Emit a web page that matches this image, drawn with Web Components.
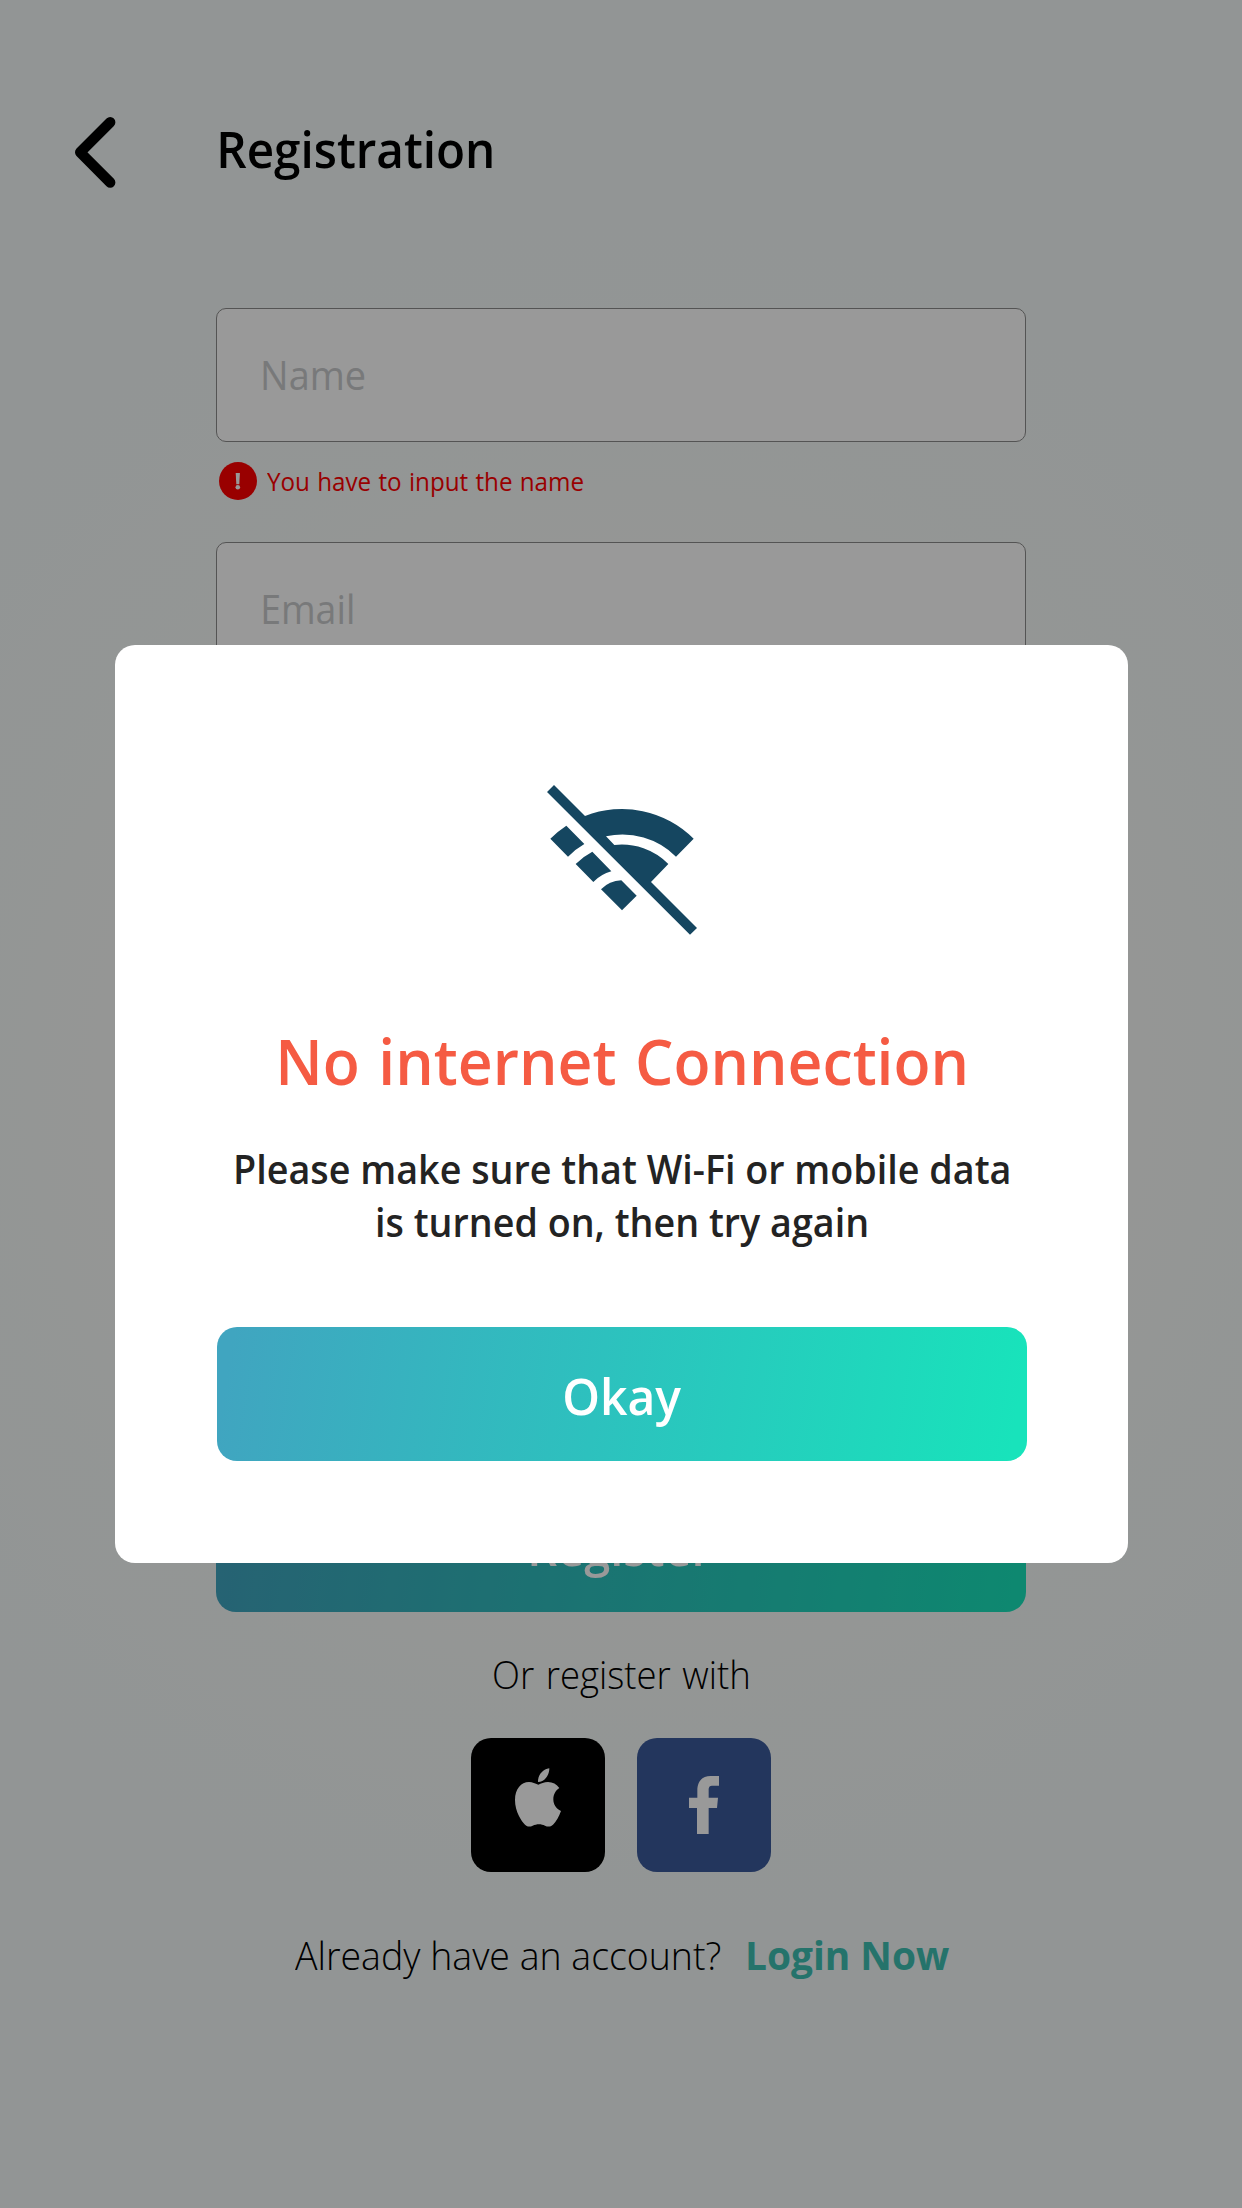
<!DOCTYPE html>
<html lang="en">
<head>
<meta charset="utf-8">
<title>Registration</title>
<style>
html,body{margin:0;padding:0}
body{width:1242px;height:2208px;overflow:hidden;font-family:"Open Sans","Noto Sans",sans-serif;color:#000}
</style>
</head>
<body>
<registration-app></registration-app>
<script>
const define = (name, html, ready) => {
  const t = document.createElement('template');
  t.innerHTML = html;
  customElements.define(name, class extends HTMLElement {
    constructor() {
      super();
      this.attachShadow({mode: 'open'}).append(t.content.cloneNode(true));
    }
    connectedCallback() { if (ready) ready(this, this.shadowRoot); }
  });
};

/* A single line of text whose drawn width is set by its ink attribute. */
define('fit-text', `
<style>
:host{display:block;flex:none;white-space:nowrap}
span{display:inline-block;transform-origin:0 50%}
</style><span></span>`, (el, root) => {
  const s = root.querySelector('span');
  const size = el.getAttribute('size'), weight = el.getAttribute('weight') || 400;
  const ink = +el.getAttribute('ink'), line = el.getAttribute('line') || 50;
  const gap = (el.getAttribute('gap') || 0) + 'px';
  s.textContent = el.getAttribute('text');
  s.style.font = weight + ' ' + size + 'px/' + line + 'px "Open Sans","Noto Sans",sans-serif';
  s.style.wordSpacing = gap;
  el.style.width = ink + 'px';
  el.style.height = line + 'px';
  const c = document.createElement('canvas').getContext('2d');
  c.font = weight + ' ' + size + 'px "Open Sans","Noto Sans",sans-serif';
  c.wordSpacing = gap;
  const m = c.measureText(s.textContent);
  const k = ink / (m.actualBoundingBoxRight + m.actualBoundingBoxLeft);
  s.style.transform = 'translateX(' + m.actualBoundingBoxLeft * k + 'px) scaleX(' + k + ')';
});

define('back-icon', `
<style>:host{display:block;flex:none;width:50px;height:100px}svg{display:block}</style>
<svg width="50" height="100" viewBox="0 0 50 100" fill="none" stroke="#000" stroke-width="10.4" stroke-linecap="round" stroke-linejoin="round"><path d="M40.2 20.3 10.2 50.3 40.2 80.5"/></svg>`);

define('page-header', `
<style>
:host{display:flex;align-items:center;gap:100px;height:100px;padding:102px 0 106px 70px}
::slotted(*){padding-bottom:7px}
</style><back-icon></back-icon><slot></slot>`);

define('text-field', `
<style>
:host{display:flex;align-items:center;box-sizing:border-box;height:134px;border:1px solid #8c8c8c;border-radius:10px;background:#fff;color:#c9cacc;padding:0 0 1px 45.5px}
</style><slot></slot>`);

define('field-error', `
<style>
:host{display:flex;align-items:center;gap:10px;height:38px;padding:20px 0 42px 3px;color:#f00}
svg{display:block}
</style>
<svg width="38" height="38" viewBox="0 0 38 38"><circle cx="19" cy="19" r="19" fill="#f00"/><path d="M16.7 11h4.2l-.6 11.2h-3z" fill="#fff"/><circle cx="18.8" cy="25.2" r="2.3" fill="#fff"/></svg>
<slot></slot>`);

define('gradient-button', `
<style>
:host{display:flex;align-items:center;justify-content:center;box-sizing:border-box;width:810px;height:134px;border-radius:20px;padding-top:3px;color:#fff;background:linear-gradient(99deg,#40a5c0 2%,#2dc1be 47%,#18e3bb 98%)}
</style><slot></slot>`);

define('social-button', `
<style>
:host{display:block;width:134px;height:134px;border-radius:20px;overflow:hidden;background:var(--tone)}
</style><slot></slot>`);

define('apple-icon', `
<style>:host,svg{display:block}</style>
<svg width="134" height="134" viewBox="33 54 402 402" fill="#fff"><path d="M235 194C225 191 218 186 207 186 183 186 165 207 165 240 165 275 184 303 195 314 202 321 210 321 218 317 230 311 244 311 255 317 263 321 272 321 279 314 289 304 297 290 303 273 289 267 280 254 280 238 280 223 287 211 298 204 290 192 278 186 264 186 252 186 243 191 235 194Z"/><path d="M268 145C268 168 252 186 234 186 233 165 248 148 268 145Z"/></svg>`);

define('facebook-icon', `
<style>:host,svg{display:block}</style>
<svg width="134" height="134" viewBox="531 54 402 402" fill="#fff"><path d="M711 342V264H687V233H712V212C712 184 726 168 752 168H777V197H759C748 197 746 201 746 210V233H774L771 264H746V342Z"/></svg>`);

define('offline-icon', `
<style>:host,svg{display:block}</style>
<svg width="150" height="150" viewBox="81 75 450 450" fill="#154660"><path d="M102 75 195 168A304 304 0 0 1 521 236L468 290A228 228 0 0 0 258 229L283 255A197 197 0 0 1 445 312L393 366 531 504 510 524 81 96Z"/><path d="M139 197 193 252A228 228 0 0 0 144 290L91 236A304 304 0 0 1 139 197Z"/><path d="M217 275 274 334A121 121 0 0 0 220 366L167 312A197 197 0 0 1 217 275Z"/><path d="M304 361 350 407 306 451 243 388A89 89 0 0 1 304 361Z"/></svg>`);

define('registration-page', `
<style>
:host{display:block;box-sizing:border-box;width:1242px;height:2208px;background:radial-gradient(circle 860px at 621px 1080px,#fbfbf9 0,#fafbf9 45%,#f3f9f8 100%)}
form{display:flex;flex-direction:column;width:810px;margin:0 0 0 216px}
gradient-button{margin-top:802px}
.or{display:flex;justify-content:center;margin:37px 0 39px}
.social{display:flex;justify-content:center;gap:32px}
.login{display:flex;justify-content:center;gap:28px;margin:58px 0 0 1px}
.login fit-text:last-child{color:#3fc0b3}
</style>
<page-header><fit-text text="Registration" size="50.4" weight="600" ink="272.5"></fit-text></page-header>
<form>
<text-field><fit-text text="Name" size="39.6" ink="102"></fit-text></text-field>
<field-error><fit-text text="You have to input the name" size="25.2" ink="316" line="38" gap="1"></fit-text></field-error>
<text-field><fit-text text="Email" size="39.6" ink="89.5"></fit-text></text-field>
<gradient-button><fit-text text="Register" size="50.4" weight="600" ink="180" line="51"></fit-text></gradient-button>
<div class="or"><fit-text text="Or register with" size="38.8" weight="300" ink="254" gap="2"></fit-text></div>
<div class="social">
<social-button style="--tone:#000"><apple-icon></apple-icon></social-button>
<social-button style="--tone:#3b5a9b"><facebook-icon></facebook-icon></social-button>
</div>
<div class="login"><fit-text text="Already have an account?" size="38.8" weight="300" ink="425"></fit-text><fit-text text="Login Now" size="38.8" weight="700" ink="201"></fit-text></div>
</form>`);

define('modal-dialog', `
<style>
:host{display:block;position:absolute;inset:0 auto auto 0;box-sizing:border-box;width:1242px;height:2208px;padding:645px 0 0 115px;background:rgba(0,0,0,.4)}
section{display:flex;flex-direction:column;align-items:center;box-sizing:border-box;width:1013px;height:918px;padding-top:140px;border-radius:20px;background:#fff}
</style><section><slot></slot></section>`);

define('offline-dialog', `
<style>
.title{color:#f55b43;margin:86px 0 42px 1px}
.copy{color:#232323;margin-left:1px}
gradient-button{margin:78px 0 0 1px}
gradient-button fit-text{margin-left:2px}
</style>
<modal-dialog>
<offline-icon></offline-icon>
<fit-text class="title" text="No internet Connection" size="63.4" weight="600" ink="685" line="80" gap="3"></fit-text>
<fit-text class="copy" text="Please make sure that Wi-Fi or mobile data" size="38.8" weight="600" ink="773" line="53"></fit-text>
<fit-text class="copy" text="is turned on, then try again" size="38.8" weight="600" ink="489.5" line="53"></fit-text>
<gradient-button><fit-text text="Okay" size="50.4" weight="600" ink="116"></fit-text></gradient-button>
</modal-dialog>`);

define('registration-app', `
<style>:host{display:block;position:relative;width:1242px;height:2208px;overflow:hidden}</style>
<registration-page></registration-page>
<offline-dialog></offline-dialog>`);
</script>
</body>
</html>
